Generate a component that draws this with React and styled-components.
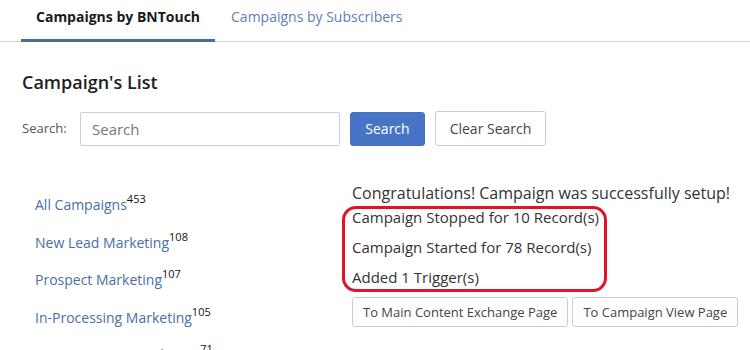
import React from 'react';
import styled, { createGlobalStyle } from 'styled-components';

const GlobalStyle = createGlobalStyle`
  body {
    margin: 0;
    background: #fff;
    font-family: "Open Sans", "Liberation Sans", sans-serif;
    color: #333;
  }
`;

const Page = styled.div`
  width: 750px;
  height: 350px;
  overflow: hidden;
`;

const TabBar = styled.div`
  display: flex;
  padding-left: 21px;
  border-bottom: 1px solid #d0d0d0;
`;

const Tab = styled.div`
  padding: 7px 15px 12px;
  font-size: 14px;
  line-height: 20px;
  margin-bottom: -1px;
  white-space: nowrap;
  font-weight: ${p => (p.active ? 700 : 400)};
  color: ${p => (p.active ? '#1a1a1a' : '#5b7fb5')};
  border-bottom: 3px solid ${p => (p.active ? '#4a6d9c' : 'transparent')};
  ${p => !p.active && 'padding-left: 16px;'}
`;

const Heading = styled.h2`
  margin: 28px 0 0 22px;
  font-size: 18px;
  line-height: 24px;
  font-weight: 600;
  color: #1e1e1e;
`;

const SearchRow = styled.div`
  display: flex;
  align-items: center;
  margin: 17px 0 0 22px;
`;

const SearchLabel = styled.label`
  font-size: 13px;
  color: #555;
  width: 58px;
  margin-top: -2px;
`;

const SearchInput = styled.input`
  box-sizing: border-box;
  width: 260px;
  height: 34px;
  border: 1px solid #cfcfcf;
  border-radius: 2px;
  padding: 0 11px;
  font-family: inherit;
  font-size: 15px;
  color: #333;
  &::placeholder {
    color: #777;
  }
`;

const Button = styled.button`
  box-sizing: border-box;
  height: ${p => p.h || 34}px;
  padding: 0 ${p => p.px || 10}px;
  border-radius: 3px;
  font-family: inherit;
  font-size: ${p => p.fs || 14}px;
  white-space: nowrap;
  cursor: pointer;
  border: 1px solid ${p => (p.primary ? '#4472c0' : '#cccccc')};
  background: ${p => (p.primary ? '#4774c4' : '#fff')};
  color: ${p => (p.primary ? '#fff' : '#444')};
`;

const SearchButton = styled(Button)`
  margin-left: 10px;
  width: 75px;
`;

const ClearButton = styled(Button)`
  margin-left: 10px;
  width: 111px;
  height: 35px;
`;

const Content = styled.div`
  display: flex;
  align-items: flex-start;
  margin-top: 38px;
`;

const CampaignList = styled.ul`
  list-style: none;
  margin: 0;
  padding: 11px 0 0 35px;
  width: 317px;
`;

const CampaignItem = styled.li`
  font-size: 14px;
  line-height: 20px;
  height: 37.5px;
  a {
    color: #4a6ea8;
    text-decoration: none;
  }
  sup {
    font-size: 11px;
    color: #111;
    line-height: 0;
    position: relative;
    top: -1px;
  }
`;

const Result = styled.div`
  display: flex;
  flex-direction: column;
`;

const Congrats = styled.div`
  font-size: 16px;
  line-height: 18px;
  color: #333;
`;

const Summary = styled.div`
  position: relative;
`;

const SummaryLine = styled.div`
  font-size: 15px;
  line-height: 30px;
  color: #333;
`;

const Highlight = styled.div`
  position: absolute;
  top: 4px;
  left: -10px;
  width: 265px;
  height: 86px;
  box-sizing: border-box;
  border: 3px solid #e01428;
  border-radius: 14px;
  pointer-events: none;
`;

const Actions = styled.div`
  display: flex;
  gap: 4px;
  margin-top: 5px;
`;

const campaigns = [
  ['All Campaigns', 453],
  ['New Lead Marketing', 108],
  ['Prospect Marketing', 107],
  ['In-Processing Marketing', 105],
  ['Past Customer Marketing', 71],
];

export default function App() {
  return (
    <Page>
      <GlobalStyle />
      <TabBar>
        <Tab active>Campaigns by BNTouch</Tab>
        <Tab>Campaigns by Subscribers</Tab>
      </TabBar>
      <Heading>Campaign's List</Heading>
      <SearchRow>
        <SearchLabel>Search:</SearchLabel>
        <SearchInput placeholder="Search" />
        <SearchButton primary>Search</SearchButton>
        <ClearButton>Clear Search</ClearButton>
      </SearchRow>
      <Content>
        <CampaignList>
          {campaigns.map(([name, count]) => (
            <CampaignItem key={name}>
              <a href="#">{name}</a>
              <sup>{count}</sup>
            </CampaignItem>
          ))}
        </CampaignList>
        <Result>
          <Congrats>Congratulations! Campaign was successfully setup!</Congrats>
          <Summary>
            <SummaryLine>Campaign Stopped for 10 Record(s)</SummaryLine>
            <SummaryLine>Campaign Started for 78 Record(s)</SummaryLine>
            <SummaryLine>Added 1 Trigger(s)</SummaryLine>
            <Highlight />
          </Summary>
          <Actions>
            <Button h={30} fs={13}>To Main Content Exchange Page</Button>
            <Button h={30} fs={13}>To Campaign View Page</Button>
          </Actions>
        </Result>
      </Content>
    </Page>
  );
}
